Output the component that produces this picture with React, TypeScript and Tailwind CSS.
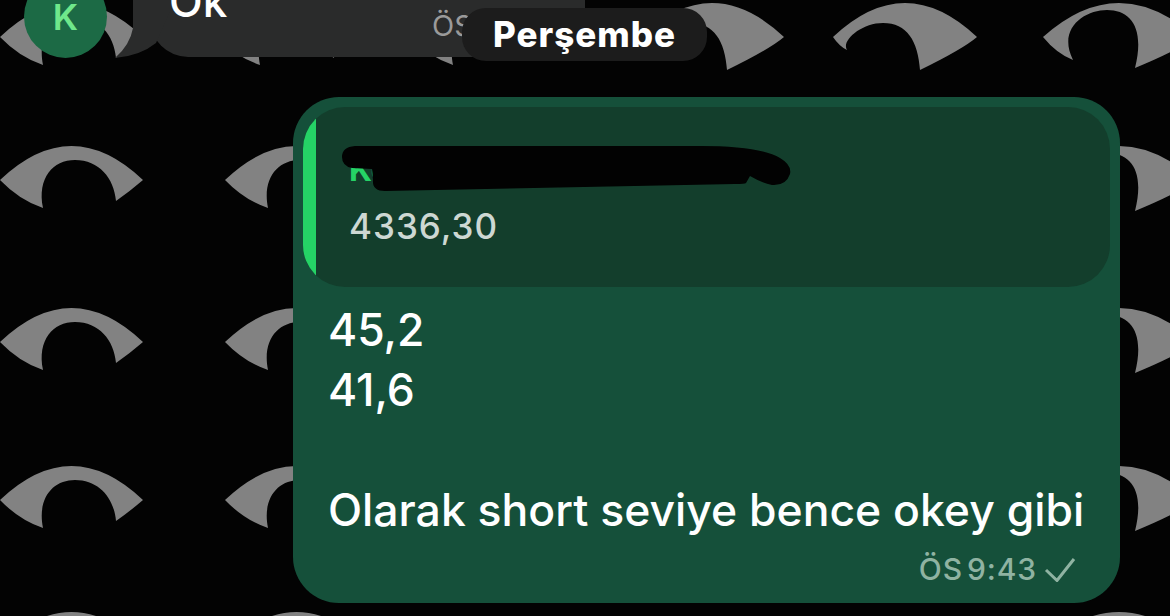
type Eye = { x: number; y: number; w: number; ll: [number, number]; lr: [number, number]; top: [number, number]; bulge: number }

const base = { w: 143, ll: [43, 28] as [number, number], lr: [116, 21] as [number, number], top: [75, -20] as [number, number], bulge: -2 }
const half = { w: 144, ll: [14, 13] as [number, number], lr: [87, 33] as [number, number], top: [50, -14] as [number, number], bulge: -2 }
const wide = { w: 152, ll: [30, 23] as [number, number], lr: [92, 31] as [number, number], top: [64, -27] as [number, number], bulge: 10 }

const eyes: Eye[] = [
  { x: 0, y: 37, ...base },
  { x: 217, y: 37, ...base },
  { x: 410, y: 37, ...base },
  { x: 640, y: 37, ...half },
  { x: 833, y: 37, ...half },
  { x: 1043, y: 37, ...wide },
  { x: 0, y: 180, ...base },
  { x: 225, y: 180, ...base },
  { x: 1043, y: 180, ...wide },
  { x: 0, y: 342, ...base },
  { x: 225, y: 342, ...base },
  { x: 1043, y: 342, ...wide },
  { x: 0, y: 500, ...base },
  { x: 225, y: 500, ...base },
  { x: 1043, y: 500, ...wide },
  { x: 0, y: 646, ...base },
  { x: 225, y: 646, ...base },
  { x: 1043, y: 646, ...wide },
]

function eyePath({ x, y, w, ll, lr, top, bulge }: Eye) {
  const [lx, ly] = [x + ll[0], y + ll[1]]
  const [rx, ry] = [x + lr[0], y + lr[1]]
  const [tx, ty] = [x + top[0], y + top[1]]
  return `M${x} ${y}Q${x + w / 2} ${y - 68} ${x + w} ${y}Q${x + w - 14} ${y + 12} ${rx} ${ry}C${rx + bulge} ${ty + 18} ${tx + 24} ${ty} ${tx} ${ty}C${tx - 22} ${ty} ${lx - 6 - Math.max(bulge, 0)} ${ty + 18} ${lx} ${ly}Q${x + ll[0] * 0.45} ${y + ll[1] * 0.72} ${x} ${y}Z`
}

const font = "font-['Inter','Noto_Sans',sans-serif]"

export default function App() {
  return (
    <div className={`relative w-[1170px] h-[616px] overflow-hidden bg-[#030303] text-white ${font}`}>
      <svg className="absolute inset-0" width="1170" height="616" viewBox="0 0 1170 616">
        {eyes.map((e, i) => (
          <path key={i} d={eyePath(e)} fill="#828282" />
        ))}
      </svg>

      <div className="relative flex flex-col">
        <div className="flex items-end h-[57px] pl-[24px]">
          <div className="w-[83px] h-[83px] shrink-0 mb-[-1px] rounded-full bg-[#1c6a45] flex items-center justify-center text-[36px] font-semibold text-[#6fe88b]">
            K
          </div>
          <div className="relative ml-[43px] w-[435px] h-[57px] rounded-bl-[38px] bg-[#2a2b2b]">
            <svg className="absolute left-[-35px] top-0" width="60" height="58" viewBox="115 0 60 58">
              <path d="M133 0V28Q130 45 115 58Q140 56 156 43L175 0Z" fill="#2a2b2b" />
            </svg>
            <div className="relative flex items-end justify-between h-[57px] overflow-hidden pl-[19px]">
              <span className="mb-[26px] text-[44px] leading-[60px] font-medium">Ok</span>
              <span className="absolute left-[282px] top-[8px] text-[29px] leading-[36px] text-[#9a9a9a]">ÖS</span>
            </div>
          </div>
        </div>

        <div className="mt-[40px] ml-[293px] w-[827px] h-[506px] rounded-[46px] bg-[#15503a] p-[10px]">
          <div className="relative flex h-[180px] rounded-[42px] overflow-hidden bg-[#133e2c]">
            <div className="w-[13px] shrink-0 bg-[#25d366]" />
            <div className="pl-[33px] pt-[45px]">
              <div className="text-[32px] leading-[36px] font-bold text-[#25d366]">Ko</div>
              <div className="mt-[16px] text-[35px] leading-[44px] font-medium text-[#cdd8d3] tracking-[1px]">4336,30</div>
            </div>
            <svg className="absolute inset-0" width="807" height="180" viewBox="303 107 807 180">
              <path
                d="M355 146L700 146Q760 146 780 158Q792 165 790 174Q786 186 772 185Q762 183 750 176L746 183Q745 184 735 184L385 191Q372 191 373 180L372 169L352 168Q342 166 342 157Q342 147 355 146Z"
                fill="#020202"
              />
            </svg>
          </div>

          <div className="pl-[25px] pt-[13px] text-[44.5px] leading-[60px] font-medium">
            <div>45,2</div>
            <div>41,6</div>
            <div className="h-[60px]" />
            <div className="whitespace-nowrap">Olarak short seviye bence okey gibi</div>
          </div>

          <div className="flex items-center justify-end gap-[7px] pr-[34px] mt-[11px] text-[#8fb3a2]">
            <span className="text-[30px] leading-[36px] tracking-[0.9px] [word-spacing:-5px] font-medium">ÖS 9:43</span>
            <svg width="32" height="26" viewBox="0 0 32 26" fill="none">
              <path d="M2 14L13 24.5L30 3" stroke="#8fb3a2" strokeWidth="3" />
            </svg>
          </div>
        </div>
      </div>

      <div className="absolute left-[462px] top-[8px] w-[245px] h-[53px] rounded-[24px] bg-[#1c1c1c] flex items-center justify-center text-[35px] font-extrabold tracking-[1px]">
        Perşembe
      </div>
    </div>
  )
}
